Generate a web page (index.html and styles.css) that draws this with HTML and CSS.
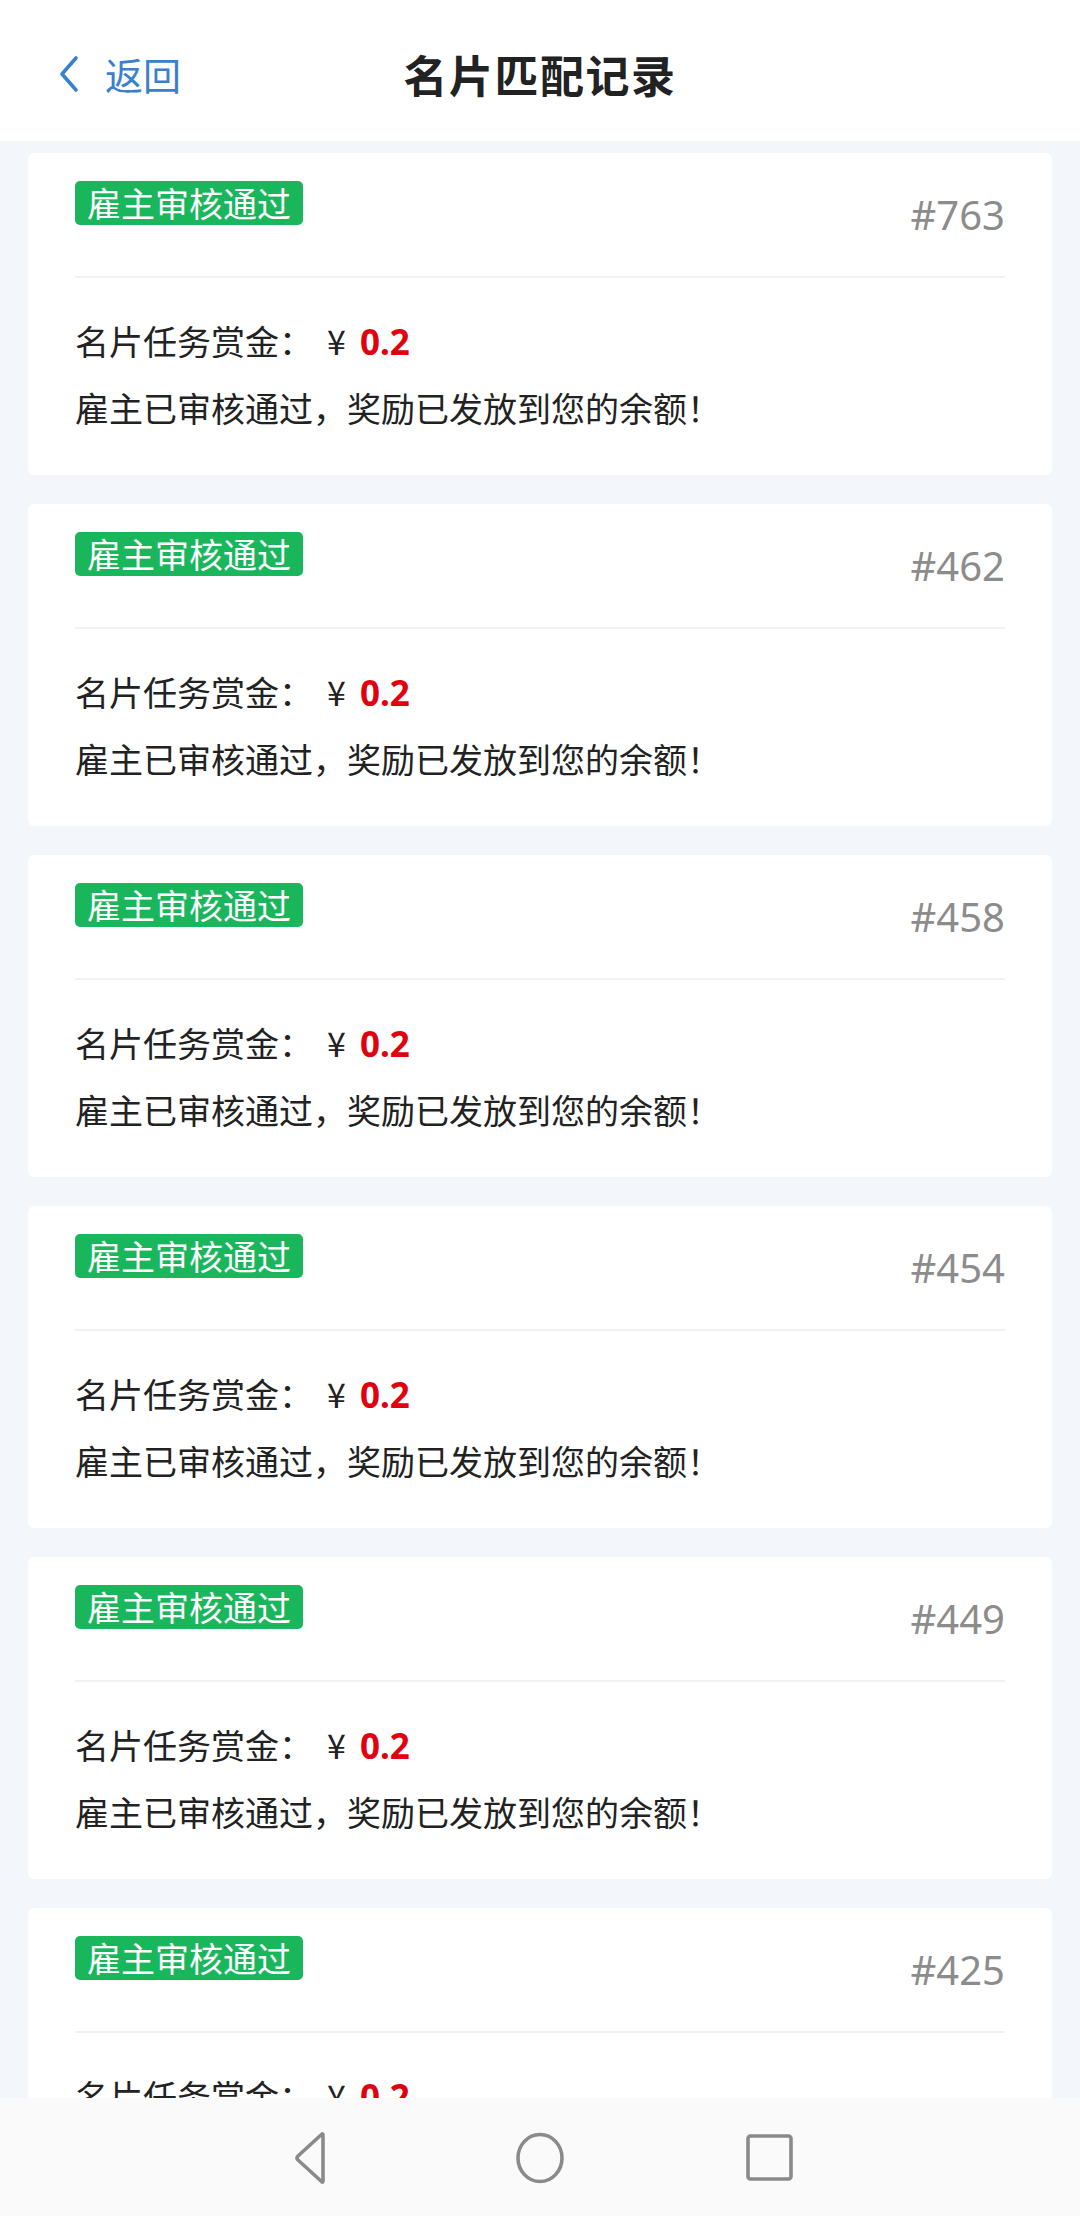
FILE: index.html
```html
<!DOCTYPE html>
<html lang="zh-CN">
<head>
<meta charset="utf-8">
<title>名片匹配记录</title>
<link rel="stylesheet" href="styles.css">
</head>
<body>
<header class="topbar">
  <a class="back">
    <svg class="back-icon" width="22" height="38" viewBox="0 0 22 38"><polyline points="18,3 4,19 18,35" fill="none" stroke="#3b80cc" stroke-width="3.6" stroke-linecap="round" stroke-linejoin="round"/></svg>
    <span class="back-text">返回</span>
  </a>
  <h1 class="title">名片匹配记录</h1>
</header>

<main class="list">
  <section class="card">
    <div class="card-head"><span class="badge">雇主审核通过</span><span class="num">#763</span></div>
    <div class="card-body">
      <p class="line">名片任务赏金：<span class="yen">¥</span><b class="amount">0.2</b></p>
      <p class="line">雇主已审核通过，奖励已发放到您的余额！</p>
    </div>
  </section>
  <section class="card">
    <div class="card-head"><span class="badge">雇主审核通过</span><span class="num">#462</span></div>
    <div class="card-body">
      <p class="line">名片任务赏金：<span class="yen">¥</span><b class="amount">0.2</b></p>
      <p class="line">雇主已审核通过，奖励已发放到您的余额！</p>
    </div>
  </section>
  <section class="card">
    <div class="card-head"><span class="badge">雇主审核通过</span><span class="num">#458</span></div>
    <div class="card-body">
      <p class="line">名片任务赏金：<span class="yen">¥</span><b class="amount">0.2</b></p>
      <p class="line">雇主已审核通过，奖励已发放到您的余额！</p>
    </div>
  </section>
  <section class="card">
    <div class="card-head"><span class="badge">雇主审核通过</span><span class="num">#454</span></div>
    <div class="card-body">
      <p class="line">名片任务赏金：<span class="yen">¥</span><b class="amount">0.2</b></p>
      <p class="line">雇主已审核通过，奖励已发放到您的余额！</p>
    </div>
  </section>
  <section class="card">
    <div class="card-head"><span class="badge">雇主审核通过</span><span class="num">#449</span></div>
    <div class="card-body">
      <p class="line">名片任务赏金：<span class="yen">¥</span><b class="amount">0.2</b></p>
      <p class="line">雇主已审核通过，奖励已发放到您的余额！</p>
    </div>
  </section>
  <section class="card">
    <div class="card-head"><span class="badge">雇主审核通过</span><span class="num">#425</span></div>
    <div class="card-body">
      <p class="line">名片任务赏金：<span class="yen">¥</span><b class="amount">0.2</b></p>
      <p class="line">雇主已审核通过，奖励已发放到您的余额！</p>
    </div>
  </section>
</main>

<nav class="navbar">
  <div class="nav-slot">
    <svg width="50" height="56" viewBox="0 0 50 56"><path d="M38 5 L38 51 Q38 53 36.5 51.5 L13 30 Q11 28 13 26 L36.5 4.5 Q38 3 38 5 Z" fill="none" stroke="#8a8a8a" stroke-width="3.6" stroke-linejoin="round"/></svg>
  </div>
  <div class="nav-slot">
    <svg width="56" height="56" viewBox="0 0 56 56"><ellipse cx="28" cy="28" rx="22" ry="23.5" fill="none" stroke="#8a8a8a" stroke-width="3.6"/></svg>
  </div>
  <div class="nav-slot">
    <svg width="56" height="56" viewBox="0 0 56 56"><rect x="6" y="6" width="43" height="43" rx="2.5" fill="none" stroke="#8a8a8a" stroke-width="3.6"/></svg>
  </div>
</nav>
</body>
</html>
```

FILE: styles.css
```css
html, body {
  margin: 0;
  padding: 0;
}
body {
  background: #f3f7fc;
  font-family: "Noto Sans CJK SC", "Noto Sans", sans-serif;
  color: #222;
}
.topbar {
  height: 141px;
  background: #fff;
  display: flex;
  align-items: center;
  justify-content: center;
  position: relative;
  box-sizing: border-box;
  padding-top: 6px;
}
.back {
  position: absolute;
  left: 58px;
  top: 54px;
  display: flex;
  align-items: center;
  color: #3b80cc;
}
.back-icon {
  display: block;
}
.back-text {
  font-size: 38px;
  line-height: 40px;
  margin-left: 25px;
}
.title {
  margin: 0;
  font-size: 44px;
  font-weight: 700;
  color: #222;
  letter-spacing: 1.5px;
}
.list {
  padding: 12px 28px 140px 28px;
  display: flex;
  flex-direction: column;
  gap: 29px;
}
.card {
  background: #fff;
  border-radius: 6px;
  padding: 0 47px;
}
.card-head {
  display: flex;
  justify-content: space-between;
  align-items: flex-start;
  height: 44px;
  padding: 28px 0 51px;
  border-bottom: 2px solid #f0f1f3;
}
.badge {
  display: block;
  height: 44px;
  line-height: 44px;
  padding: 0 12px;
  background: #1ab65c;
  color: #fff;
  font-size: 34px;
  border-radius: 5px;
}
.num {
  display: block;
  height: 44px;
  margin-top: 12px;
  line-height: 44px;
  font-family: "Noto Sans", Roboto, sans-serif;
  font-size: 40px;
  color: #8c8c8c;
}
.card-body {
  padding: 30px 0 34px;
}
.line {
  margin: 0;
  font-size: 34px;
  line-height: 66px;
  color: #222;
}
.yen {
  margin-left: 14px;
  margin-right: 14px;
}
.amount {
  color: #e0000e;
  font-family: "Noto Sans", sans-serif;
  font-size: 35px;
  font-weight: 700;
}
.navbar {
  position: fixed;
  left: 0;
  right: 0;
  bottom: 0;
  height: 118px;
  background: #fafafa;
  display: flex;
  justify-content: center;
  align-items: center;
}
.nav-slot {
  width: 230px;
  display: flex;
  justify-content: center;
  align-items: center;
  padding-top: 2px;
}
.nav-slot svg {
  display: block;
}
```
